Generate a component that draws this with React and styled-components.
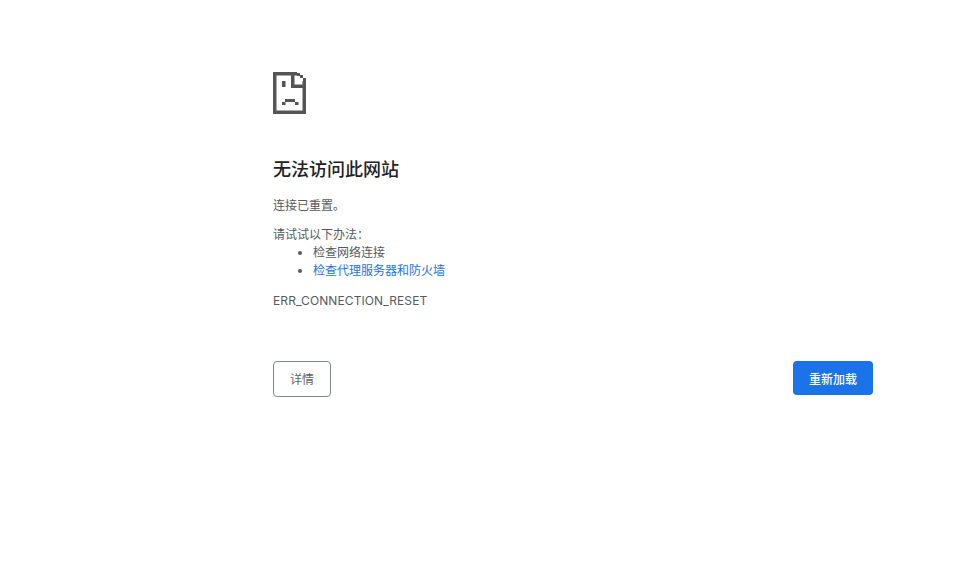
import React from "react";
import styled, { createGlobalStyle } from "styled-components";

const Global = createGlobalStyle`
  html, body { margin: 0; padding: 0; background: #fff; }
  body { font-family: Inter, "Noto Sans CJK SC", sans-serif; font-size: 12px; color: #565a5f; }
`;
const Page = styled.main`
  width: 600px;
  margin: 0 0 0 273px;
  padding-top: 72px;
  height: 502px;
`;
const IconWrap = styled.div`
  height: 42px;
  margin-bottom: 44px;
  svg { display: block; }
`;
const Title = styled.h1`
  margin: 0 0 15px;
  font-size: 18px;
  line-height: 24px;
  font-weight: 500;
  color: #202124;
`;
const Para = styled.p`
  margin: 0 0 10px;
  font-size: 12px;
  line-height: 18px;
`;
const Suggestions = styled.ul`
  margin: 2px 0 12px;
  padding-left: 40px;
  li { line-height: 18px; }
`;
const Hint = styled.a`
  color: #1a73e8;
  text-decoration: none;
`;
const Code = styled.div`
  font-size: 12px;
  line-height: 18px;
  letter-spacing: 0.1px;
  margin-bottom: 51px;
`;
const Actions = styled.div`
  display: flex;
  justify-content: space-between;
  align-items: flex-start;
`;
const DetailsButton = styled.button`
  width: 58px;
  height: 36px;
  padding: 0 0 2px;
  background: #fff;
  border: 1px solid #80868b;
  border-radius: 4px;
  color: #5f6368;
  font: inherit;
`;
const ReloadButton = styled.button`
  width: 80px;
  height: 34px;
  padding: 0;
  background: #1a73e8;
  border: 0;
  border-radius: 4px;
  color: #fff;
  font: inherit;
  font-weight: 500;
`;

const SadPage = () => (
  <svg width="33" height="42" viewBox="0 0 33 42" fill="#555">
    <path d="M0 0h24v3.5H3.5v35h26V9H33v33H0z" />
    <path d="M18 0h3.500v12.500H33V16H18z" />
    <path d="M24 1h3v3h-3zM27 3h3v3h-3zM30 6h3v3h-3z" />
    <rect x="9" y="9" width="3.5" height="6" />
    <rect x="12" y="27" width="10" height="3" />
    <rect x="9" y="30" width="3.500" height="3" />
    <rect x="22" y="30" width="3.500" height="3" />
  </svg>
);

export default function App() {
  return (
    <>
      <Global />
      <Page>
        <IconWrap><SadPage /></IconWrap>
        <Title>无法访问此网站</Title>
        <Para>连接已重置。</Para>
        <div>请试试以下办法：</div>
        <Suggestions>
          <li>检查网络连接</li>
          <li><Hint href="#">检查代理服务器和防火墙</Hint></li>
        </Suggestions>
        <Code>ERR_CONNECTION_RESET</Code>
        <Actions>
          <DetailsButton>详情</DetailsButton>
          <ReloadButton>重新加载</ReloadButton>
        </Actions>
      </Page>
    </>
  );
}
